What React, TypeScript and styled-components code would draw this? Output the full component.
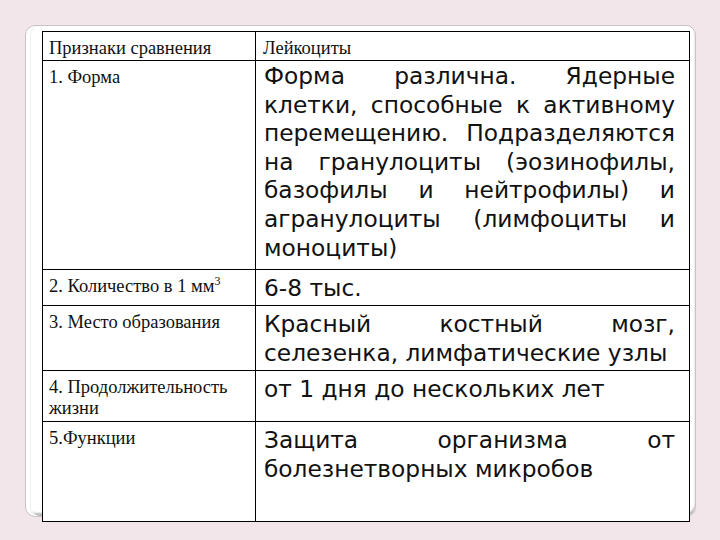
import React from "react";
import styled, { createGlobalStyle } from "styled-components";

const Global = createGlobalStyle`
  html, body {
    margin: 0;
    padding: 0;
    background: #f3e6ea;
  }
  body {
    width: 720px;
    height: 540px;
    overflow: hidden;
  }
`;

const Slide = styled.div`
  width: 720px;
  height: 540px;
  padding: 25px 0 0 25px;
  box-sizing: border-box;
  background: #f3e6ea;
`;

const Card = styled.div`
  width: 671px;
  height: 492px;
  box-sizing: border-box;
  background: #ffffff;
  border: 1px solid #c9c3c6;
  border-radius: 10px;
  box-shadow: inset 4px 0 0 #ffffff, inset 5px 0 0 #eef0f0, inset 0 -3px 2px rgba(0, 0, 0, 0.28);
  padding: 5px 0 0 16px;
`;

const Table = styled.table`
  width: 647px;
  border-collapse: collapse;
  table-layout: fixed;
  background: #ffffff;
  position: relative;
`;

const Col = styled.col<{ $w: number }>`
  width: ${(p) => p.$w}px;
`;

const Row = styled.tr<{ $h: number }>`
  height: ${(p) => p.$h}px;
`;

const LabelCell = styled.td`
  border: 1px solid #000;
  vertical-align: top;
  padding: 6px 6px 0 6px;
  font-family: "Liberation Serif", "Times New Roman", serif;
  font-size: 18.5px;
  line-height: 21px;
  color: #111;
`;

const HeadCell = styled(LabelCell)<{ $wide?: boolean }>`
  padding-left: ${(p) => (p.$wide ? "7px" : "6px")};
`;

const TextCell = styled.td<{ $tight?: boolean }>`
  border: 1px solid #000;
  vertical-align: top;
  padding: ${(p) => (p.$tight ? "1px" : "4px")} 14px 0 8px;
  font-family: "DejaVu Sans", Verdana, sans-serif;
  font-size: 23.3px;
  line-height: 28.6px;
  color: #111;
`;

const Line = styled.span<{ $last?: boolean }>`
  display: block;
  white-space: nowrap;
  text-align: ${(p) => (p.$last ? "left" : "justify")};
  text-align-last: ${(p) => (p.$last ? "left" : "justify")};
`;

const Sup = styled.sup`
  font-size: 12px;
  line-height: 0;
  vertical-align: 7px;
`;

type RowData = {
  label: React.ReactNode;
  lines: string[];
  height: number;
  tight?: boolean;
};

const rows: RowData[] = [
  {
    label: "1. Форма",
    lines: [
      "Форма различна. Ядерные",
      "клетки, способные к активному",
      "перемещению. Подразделяются",
      "на гранулоциты (эозинофилы,",
      "базофилы и нейтрофилы) и",
      "агранулоциты (лимфоциты и",
      "моноциты)",
    ],
    height: 209,
    tight: true,
  },
  {
    label: (
      <>
        2. Количество в 1 мм<Sup>3</Sup>
      </>
    ),
    lines: ["6-8 тыс."],
    height: 36,
  },
  {
    label: "3. Место образования",
    lines: ["Красный костный мозг,", "селезенка, лимфатические узлы"],
    height: 65,
  },
  {
    label: "4. Продолжительность жизни",
    lines: ["от 1 дня до нескольких лет"],
    height: 51,
  },
  {
    label: "5.Функции",
    lines: ["Защита организма от", "болезнетворных микробов"],
    height: 100,
  },
];

export default function App() {
  return (
    <>
      <Global />
      <Slide>
        <Card>
          <Table>
            <colgroup>
              <Col $w={213} />
              <Col $w={434} />
            </colgroup>
            <tbody>
              <Row $h={29}>
                <HeadCell>Признаки сравнения</HeadCell>
                <HeadCell $wide>Лейкоциты</HeadCell>
              </Row>
              {rows.map((r, i) => (
                <Row key={i} $h={r.height}>
                  <LabelCell>{r.label}</LabelCell>
                  <TextCell $tight={r.tight}>
                    {r.lines.map((l, j) => (
                      <Line key={j} $last={j === r.lines.length - 1}>
                        {l}
                      </Line>
                    ))}
                  </TextCell>
                </Row>
              ))}
            </tbody>
          </Table>
        </Card>
      </Slide>
    </>
  );
}
